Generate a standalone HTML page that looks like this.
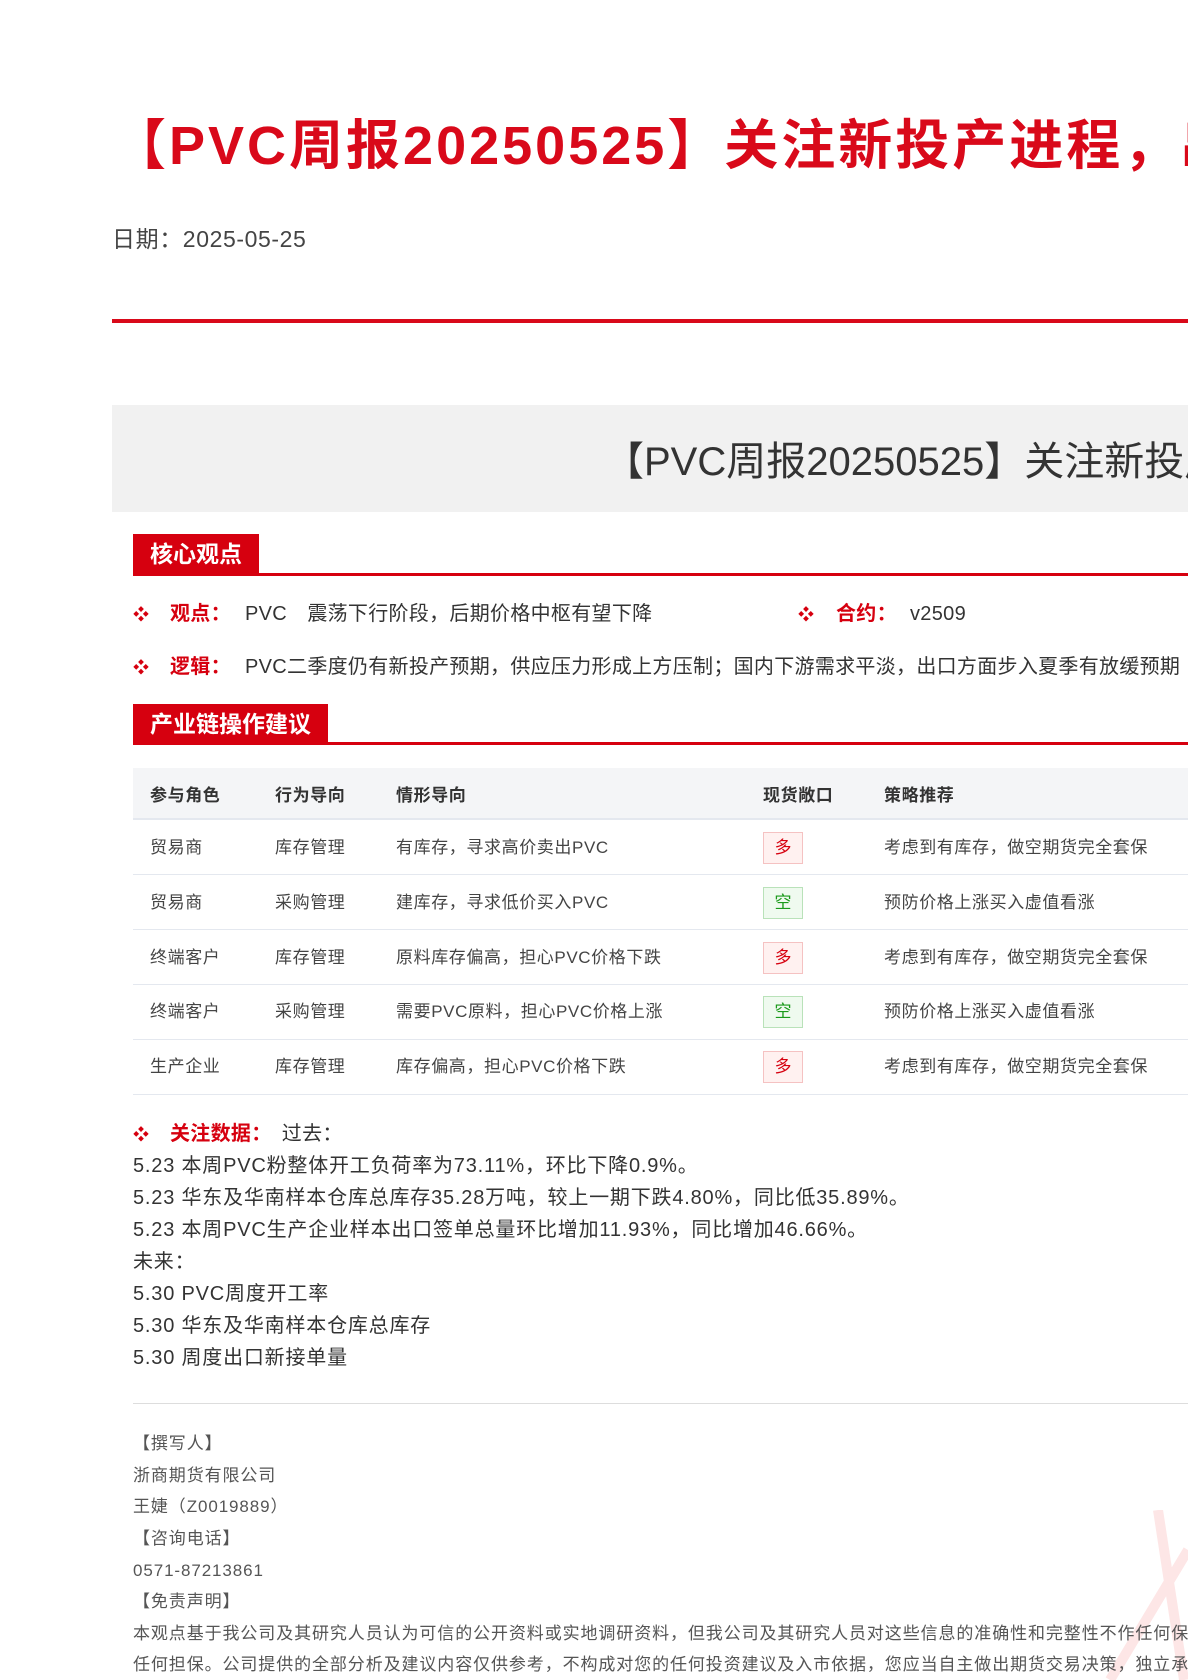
<!DOCTYPE html>
<html><head><meta charset="utf-8">
<style>
*{margin:0;padding:0;box-sizing:border-box}
html,body{width:1188px;height:1680px;overflow:hidden;background:#fff}
body{font-family:"Liberation Sans","Noto Sans CJK SC",sans-serif;color:#333}
#w{position:relative;width:1188px;height:1680px;overflow:hidden}
.a{position:absolute;white-space:nowrap}
.title{left:112px;top:110px;font-size:54px;letter-spacing:3px;font-weight:bold;color:#d9091a;line-height:72px}
.date{left:112px;top:224px;font-size:23px;letter-spacing:0.6px;color:#444;line-height:30px}
.redline{left:112px;top:319px;width:1076px;height:4px;background:#d9091a}
.gray{left:112px;top:405px;width:1076px;height:107px;background:#f1f1f1}
.gtitle{left:604px;top:436px;font-size:40px;color:#333;line-height:52px}
.sec{left:133px;height:40px;background:#d6000f;color:#fff;font-weight:bold;font-size:23px;line-height:40px;padding:0 17px}
.secline{left:133px;width:1055px;height:3px;background:#d6000f}
.row{font-size:20px;line-height:28px;color:#333;letter-spacing:0.3px}
.bul{color:#d6000f;font-size:16px}
.lab{color:#d6000f;font-weight:bold}
.th{left:133px;top:768px;width:1055px;height:52px;background:#f4f5f7;border-bottom:2px solid #e4e8ef}
.tr{left:133px;width:1055px;height:55px;border-bottom:1px solid #e4e8ef}
.cell{font-size:17px;color:#444;line-height:24px;letter-spacing:0.6px}
.hc{font-weight:bold;color:#333}
.badge{width:40px;height:32px;font-size:17px;line-height:30px;text-align:center}
.r{border:1px solid #f5c2c2;background:#fff1f0;color:#d6000f}
.g{border:1px solid #b9e2b9;background:#effaef;color:#1a9a1a}
.d{font-size:20px;line-height:32px;color:#333;left:133px;letter-spacing:0.8px}
.f{font-size:17px;line-height:31.6px;color:#555;left:133px;letter-spacing:0.9px}
</style></head><body><div id="w">
<div class="a title">【PVC周报20250525】关注新投产进程，出口表现较好</div>
<div class="a date">日期：2025-05-25</div>
<div class="a redline"></div>
<div class="a gray"></div>
<div class="a gtitle">【PVC周报20250525】关注新投产进程</div>

<div class="a sec" style="top:534px">核心观点</div>
<div class="a secline" style="top:573px"></div>
<div class="a row" style="left:133px;top:600px"><span class="bul">❖</span></div>
<div class="a row" style="left:170px;top:600px"><span class="lab">观点：</span></div>
<div class="a row" style="left:245px;top:600px">PVC　震荡下行阶段，后期价格中枢有望下降</div>
<div class="a row" style="left:798px;top:600px"><span class="bul">❖</span></div>
<div class="a row" style="left:836px;top:600px"><span class="lab">合约：</span></div>
<div class="a row" style="left:910px;top:600px">v2509</div>
<div class="a row" style="left:133px;top:653px"><span class="bul">❖</span></div>
<div class="a row" style="left:170px;top:653px"><span class="lab">逻辑：</span></div>
<div class="a row" style="left:245px;top:653px">PVC二季度仍有新投产预期，供应压力形成上方压制；国内下游需求平淡，出口方面步入夏季有放缓预期</div>

<div class="a sec" style="top:704px">产业链操作建议</div>
<div class="a secline" style="top:742px"></div>

<div class="a th"></div>
<div class="a cell hc" style="left:150px;top:784px">参与角色</div>
<div class="a cell hc" style="left:275px;top:784px">行为导向</div>
<div class="a cell hc" style="left:396px;top:784px">情形导向</div>
<div class="a cell hc" style="left:763px;top:784px">现货敞口</div>
<div class="a cell hc" style="left:884px;top:784px">策略推荐</div>

<div class="a tr" style="top:820px"></div>
<div class="a cell" style="left:150px;top:836px">贸易商</div>
<div class="a cell" style="left:275px;top:836px">库存管理</div>
<div class="a cell" style="left:396px;top:836px">有库存，寻求高价卖出PVC</div>
<div class="a badge r" style="left:763px;top:832px">多</div>
<div class="a cell" style="left:884px;top:836px">考虑到有库存，做空期货完全套保</div>

<div class="a tr" style="top:875px"></div>
<div class="a cell" style="left:150px;top:891px">贸易商</div>
<div class="a cell" style="left:275px;top:891px">采购管理</div>
<div class="a cell" style="left:396px;top:891px">建库存，寻求低价买入PVC</div>
<div class="a badge g" style="left:763px;top:887px">空</div>
<div class="a cell" style="left:884px;top:891px">预防价格上涨买入虚值看涨</div>

<div class="a tr" style="top:930px"></div>
<div class="a cell" style="left:150px;top:946px">终端客户</div>
<div class="a cell" style="left:275px;top:946px">库存管理</div>
<div class="a cell" style="left:396px;top:946px">原料库存偏高，担心PVC价格下跌</div>
<div class="a badge r" style="left:763px;top:942px">多</div>
<div class="a cell" style="left:884px;top:946px">考虑到有库存，做空期货完全套保</div>

<div class="a tr" style="top:985px"></div>
<div class="a cell" style="left:150px;top:1000px">终端客户</div>
<div class="a cell" style="left:275px;top:1000px">采购管理</div>
<div class="a cell" style="left:396px;top:1000px">需要PVC原料，担心PVC价格上涨</div>
<div class="a badge g" style="left:763px;top:996px">空</div>
<div class="a cell" style="left:884px;top:1000px">预防价格上涨买入虚值看涨</div>

<div class="a tr" style="top:1040px"></div>
<div class="a cell" style="left:150px;top:1055px">生产企业</div>
<div class="a cell" style="left:275px;top:1055px">库存管理</div>
<div class="a cell" style="left:396px;top:1055px">库存偏高，担心PVC价格下跌</div>
<div class="a badge r" style="left:763px;top:1051px">多</div>
<div class="a cell" style="left:884px;top:1055px">考虑到有库存，做空期货完全套保</div>

<div class="a row" style="left:133px;top:1120px"><span class="bul">❖</span></div>
<div class="a row" style="left:170px;top:1120px"><span class="lab">关注数据：</span>　过去：</div>
<div class="a d" style="top:1150px">5.23 本周PVC粉整体开工负荷率为73.11%，环比下降0.9%。</div>
<div class="a d" style="top:1182px">5.23 华东及华南样本仓库总库存35.28万吨，较上一期下跌4.80%，同比低35.89%。</div>
<div class="a d" style="top:1214px">5.23 本周PVC生产企业样本出口签单总量环比增加11.93%，同比增加46.66%。</div>
<div class="a d" style="top:1246px">未来：</div>
<div class="a d" style="top:1278px">5.30 PVC周度开工率</div>
<div class="a d" style="top:1310px">5.30 华东及华南样本仓库总库存</div>
<div class="a d" style="top:1342px">5.30 周度出口新接单量</div>

<div class="a" style="left:133px;top:1403px;width:1055px;height:1px;background:#ddd"></div>
<svg class="a" style="left:1080px;top:1510px" width="108" height="170"><path d="M78 0 L104 170 M108 40 L30 170" stroke="#fde6e6" stroke-width="10" fill="none"/></svg>
<div class="a f" style="top:1428px">【撰写人】</div>
<div class="a f" style="top:1460px">浙商期货有限公司</div>
<div class="a f" style="top:1491px">王婕（Z0019889）</div>
<div class="a f" style="top:1523px">【咨询电话】</div>
<div class="a f" style="top:1555px">0571-87213861</div>
<div class="a f" style="top:1586px">【免责声明】</div>
<div class="a f" style="top:1618px">本观点基于我公司及其研究人员认为可信的公开资料或实地调研资料，但我公司及其研究人员对这些信息的准确性和完整性不作任何保证，</div>
<div class="a f" style="top:1649px">任何担保。公司提供的全部分析及建议内容仅供参考，不构成对您的任何投资建议及入市依据，您应当自主做出期货交易决策，独立承担风险</div>
</div></body></html>
